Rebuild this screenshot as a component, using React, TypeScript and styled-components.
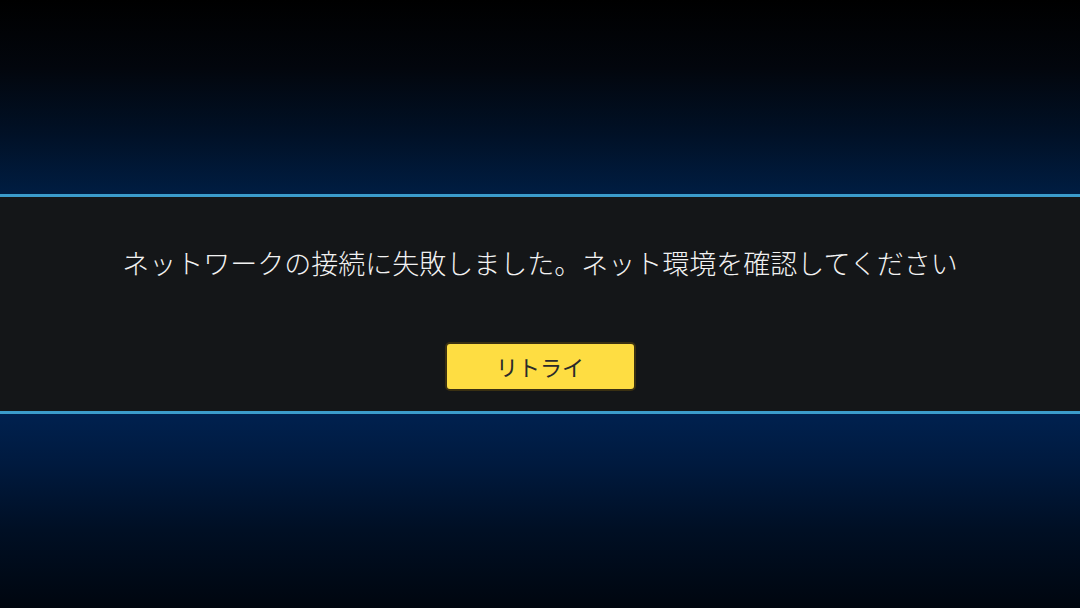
import styled, { createGlobalStyle } from "styled-components";

const GlobalStyle = createGlobalStyle`
  html, body {
    margin: 0;
    padding: 0;
    background: #000;
  }
  body {
    font-family: "Noto Sans CJK JP", "Noto Sans", sans-serif;
  }
`;

const Screen = styled.div`
  width: 1080px;
  height: 608px;
  overflow: hidden;
  display: flex;
  flex-direction: column;
  background: #000;
`;

const TopGlow = styled.div`
  height: 194px;
  background: linear-gradient(
    to bottom,
    #000000 0%,
    #02060d 35%,
    #011127 70%,
    #001d42 100%
  );
`;

const BottomGlow = styled.div`
  flex: 1;
  background: linear-gradient(
    to bottom,
    #00214f 0%,
    #001a3f 25%,
    #000f24 60%,
    #00060f 100%
  );
`;

const Rule = styled.div`
  height: 3px;
  background: #3b9ccb;
`;

const Band = styled.div`
  height: 214px;
  background: #141618;
  display: flex;
  flex-direction: column;
  align-items: center;
`;

const Message = styled.p`
  margin: 48px 0 0;
  font-size: 27px;
  font-weight: 300;
  line-height: 36px;
  color: #f2f2f2;
  white-space: nowrap;
`;

const RetryButton = styled.button`
  margin-top: 61px;
  width: 191px;
  height: 49px;
  border-radius: 5px;
  border: 2px solid #3a3012;
  background: #fedd42;
  color: #2a2a2a;
  font-family: "Noto Sans CJK JP", "Noto Sans", sans-serif;
  font-size: 22px;
  font-weight: 400;
  box-sizing: border-box;
  padding: 0 0 2px;
  cursor: pointer;
`;

export default function App() {
  return (
    <>
      <GlobalStyle />
      <Screen>
        <TopGlow />
        <Rule />
        <Band>
          <Message>ネットワークの接続に失敗しました。ネット環境を確認してください</Message>
          <RetryButton>リトライ</RetryButton>
        </Band>
        <Rule />
        <BottomGlow />
      </Screen>
    </>
  );
}
